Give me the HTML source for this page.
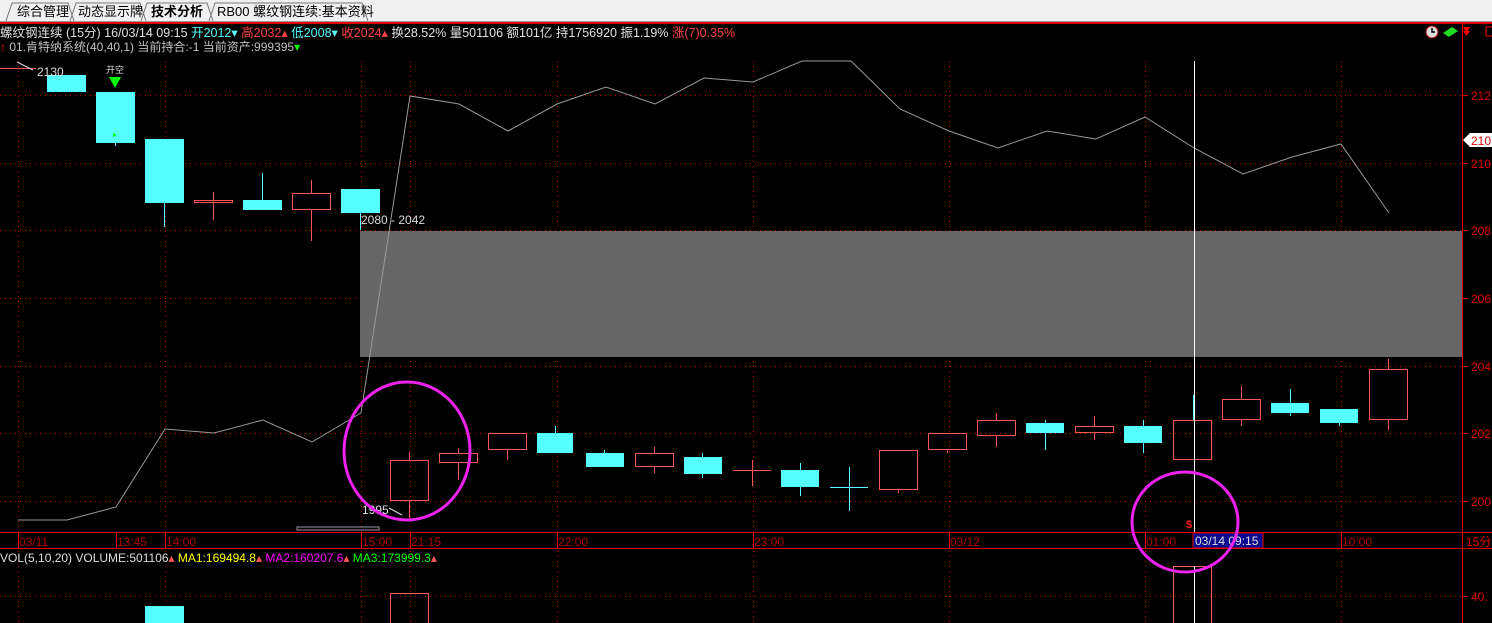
<!DOCTYPE html>
<html><head><meta charset="utf-8"><style>
html,body{margin:0;padding:0;background:#000;width:1492px;height:623px;overflow:hidden}
svg{display:block}
text{font-family:"Liberation Sans","Noto Sans CJK SC",sans-serif}
</style></head><body>
<svg width="1492" height="623" viewBox="0 0 1492 623" xmlns="http://www.w3.org/2000/svg">
<rect width="1492" height="623" fill="#000"/>
<!-- tab bar -->
<rect x="0" y="0" width="1492" height="21" fill="#f0f0f0"/>
<line x1="0" y1="21.5" x2="1492" y2="21.5" stroke="#999"/>
<line x1="0" y1="23" x2="1492" y2="23" stroke="#e00000" stroke-width="2"/>
<g fill="none" stroke="#777">
<path d="M6 21 L12 3 H68 L74 21"/><path d="M70 21 L76 3 H140 L146 21"/><path d="M141 21 L147 3 H207 L213 21"/><path d="M209 21 L215 3 H362 L368 21"/>
</g>
<g font-size="13" fill="#000">
<text x="17" y="16">综合管理</text><text x="78" y="16">动态显示牌</text><text x="151" y="16" font-weight="bold">技术分析</text><text x="217" y="16">RB00 螺纹钢连续:基本资料</text>
</g>
<!-- info lines -->
<text x="0" y="37" font-size="12.5" fill="#e0e0e0">螺纹钢连续 (15分) 16/03/14 09:15 <tspan fill="#55ffff">开2012</tspan><tspan fill="#55ffff">▾</tspan> <tspan fill="#ff4444">高2032▴</tspan> <tspan fill="#55ffff">低2008▾</tspan> <tspan fill="#ff4444">收2024▴</tspan> 换28.52% 量501106 额101亿 持1756920 振1.19% <tspan fill="#ff4444">涨(7)0.35%</tspan></text>
<text x="0" y="51" font-size="12" fill="#c0c0c0"><tspan fill="#ff2020">↑</tspan> 01.肯特纳系统(40,40,1) 当前持合:-1 当前资产:999395<tspan fill="#00ff00">▾</tspan></text>
<!-- icons top right -->
<circle cx="1432" cy="32" r="6" fill="#ddd" stroke="#a00"/><path d="M1432 28 V32 H1435" stroke="#000" fill="none" stroke-width="1.5"/>
<path d="M1443 33 L1452 27 L1458 31 L1449 37 Z" fill="#22dd22"/>
<path d="M1463 27 h7 l-2 4 h2 l-3.5 5 l-3.5 -5 h2 z" fill="#f00"/>
<rect x="1486" y="27" width="8" height="9" fill="none" stroke="#f00"/>
<!-- grid dotted -->
<g stroke="#c00000" stroke-dasharray="1 4" stroke-width="1">
<line x1="0" y1="95.5" x2="1462" y2="95.5"/><line x1="0" y1="163.5" x2="1462" y2="163.5"/><line x1="0" y1="230.5" x2="1462" y2="230.5"/><line x1="0" y1="298.5" x2="1462" y2="298.5"/><line x1="0" y1="366.5" x2="1462" y2="366.5"/><line x1="0" y1="433.5" x2="1462" y2="433.5"/><line x1="0" y1="501.5" x2="1462" y2="501.5"/>
<line x1="0" y1="596.5" x2="1462" y2="596.5"/>
<line x1="18.5" y1="61" x2="18.5" y2="623"/><line x1="165.5" y1="61" x2="165.5" y2="623"/><line x1="361.5" y1="61" x2="361.5" y2="623"/><line x1="410.5" y1="61" x2="410.5" y2="623"/><line x1="557.5" y1="61" x2="557.5" y2="623"/><line x1="753.5" y1="61" x2="753.5" y2="623"/><line x1="949.5" y1="61" x2="949.5" y2="623"/><line x1="1145.5" y1="61" x2="1145.5" y2="623"/><line x1="1341.5" y1="61" x2="1341.5" y2="623"/>
</g>
<!-- gray band -->
<rect x="360" y="231" width="1102" height="126" fill="#666"/>
<!-- gray line -->
<polyline fill="none" stroke="#999" stroke-width="1" points="18,520 67,520 116,507 165,429 214,433 263,420 312,442 361,413 410,96 459,104 508,131 557,104 606,87 655,104 704,78 753,82 802,61 851,61 900,109 949,131 998,148 1047,131 1096,139 1145,117 1194,148 1243,174 1292,157 1341,144 1389,213"/>
<!-- candles -->
<g fill="#55ffff">
<rect x="47" y="75" width="39" height="17"/>
<rect x="96" y="92" width="39" height="51"/><rect x="115" y="143" width="1" height="3"/>
<rect x="145" y="139" width="39" height="64"/><rect x="164" y="203" width="1" height="24"/>
<rect x="243" y="200" width="39" height="10"/><rect x="262" y="173" width="1" height="27"/>
<rect x="341" y="189" width="39" height="24"/><rect x="360" y="213" width="1" height="17"/>
<rect x="537" y="433" width="36" height="20"/><rect x="555" y="426" width="1" height="7"/>
<rect x="586" y="453" width="38" height="14"/><rect x="604" y="450" width="1" height="3"/>
<rect x="684" y="457" width="38" height="17"/><rect x="702" y="453" width="1" height="25"/>
<rect x="781" y="470" width="38" height="17"/><rect x="800" y="463" width="1" height="33"/>
<rect x="830" y="487" width="38" height="1"/><rect x="849" y="467" width="1" height="44"/>
<rect x="1026" y="423" width="38" height="10"/><rect x="1045" y="420" width="1" height="30"/>
<rect x="1124" y="426" width="38" height="17"/><rect x="1143" y="420" width="1" height="33"/>
<rect x="1271" y="403" width="38" height="10"/><rect x="1290" y="389" width="1" height="27"/>
<rect x="1320" y="409" width="38" height="14"/><rect x="1339" y="423" width="1" height="3"/>
<rect x="145" y="606" width="39" height="17"/>
</g>
<g fill="none" stroke="#ff5555" stroke-width="1">
<rect x="194.5" y="200.5" width="38" height="2"/><line x1="213.5" y1="192" x2="213.5" y2="220"/>
<rect x="292.5" y="193.5" width="38" height="16"/><line x1="311.5" y1="180" x2="311.5" y2="193"/><line x1="311.5" y1="210" x2="311.5" y2="241"/>
<rect x="390.5" y="460.5" width="38" height="40"/><line x1="409.5" y1="452" x2="409.5" y2="460"/><line x1="409.5" y1="501" x2="409.5" y2="518"/>
<rect x="439.5" y="453.5" width="38" height="9"/><line x1="458.5" y1="448" x2="458.5" y2="453"/><line x1="458.5" y1="463" x2="458.5" y2="480"/>
<rect x="488.5" y="433.5" width="38" height="16"/><line x1="507.5" y1="450" x2="507.5" y2="460"/>
<rect x="635.5" y="453.5" width="38" height="13"/><line x1="654.5" y1="447" x2="654.5" y2="453"/><line x1="654.5" y1="467" x2="654.5" y2="473"/>
<line x1="733" y1="470.5" x2="771" y2="470.5"/><line x1="752.5" y1="460" x2="752.5" y2="486"/>
<rect x="879.5" y="450.5" width="38" height="39"/><line x1="898.5" y1="490" x2="898.5" y2="493"/>
<rect x="928.5" y="433.5" width="38" height="16"/><line x1="947.5" y1="450" x2="947.5" y2="453"/>
<rect x="977.5" y="420.5" width="38" height="15"/><line x1="996.5" y1="413" x2="996.5" y2="420"/><line x1="996.5" y1="436" x2="996.5" y2="447"/>
<rect x="1075.5" y="426.5" width="38" height="6"/><line x1="1094.5" y1="416" x2="1094.5" y2="426"/><line x1="1094.5" y1="433" x2="1094.5" y2="440"/>
<rect x="1173.5" y="420.5" width="38" height="39"/>
<rect x="1222.5" y="399.5" width="38" height="20"/><line x1="1241.5" y1="386" x2="1241.5" y2="399"/><line x1="1241.5" y1="420" x2="1241.5" y2="426"/>
<rect x="1369.5" y="369.5" width="38" height="50"/><line x1="1388.5" y1="359" x2="1388.5" y2="369"/><line x1="1388.5" y1="420" x2="1388.5" y2="430"/>
<rect x="390.5" y="593.5" width="38" height="32"/>
<rect x="1173.5" y="566.5" width="38" height="60"/>
<polyline points="0,68.5 36,68.5"/>
</g>
<!-- white crosshair -->
<line x1="1194.5" y1="61" x2="1194.5" y2="533" stroke="#fff"/>
<line x1="1194.5" y1="566" x2="1194.5" y2="623" stroke="#fff"/>
<line x1="1193.5" y1="395" x2="1193.5" y2="420" stroke="#55ffff"/>
<!-- markers / labels -->
<text x="37" y="76" font-size="12" fill="#ddd">2130</text>
<path d="M17 62 L33 70" stroke="#ddd"/>
<text x="106" y="73" font-size="9" fill="#ddd">开空</text>
<path d="M109 77 H121 L115 88 Z" fill="#00ff00"/>
<path d="M113 133 L117 135 L113 137 Z" fill="#00ff00"/>
<text x="361" y="224" font-size="12" fill="#ddd">2080 - 2042</text>
<text x="362" y="514" font-size="12" fill="#ddd">1995</text>
<path d="M389 508 L402 515" stroke="#ddd"/>
<rect x="297" y="527" width="82" height="3" fill="none" stroke="#99a" stroke-width="1"/>
<text x="1186" y="528" font-size="11" fill="#ff2020" font-weight="bold">$</text>
<!-- right axis -->
<line x1="1462.5" y1="24" x2="1462.5" y2="623" stroke="#e00000"/>
<g font-size="12" fill="#e00000">
<text x="1471" y="100">212</text><text x="1471" y="168">210</text><text x="1471" y="235">208</text><text x="1471" y="303">206</text><text x="1471" y="371">204</text><text x="1471" y="438">202</text><text x="1471" y="506">200</text><text x="1471" y="601">40.</text>
<text x="1466" y="546">15分</text>
</g>
<g stroke="#e00000"><line x1="1462" y1="95.5" x2="1468" y2="95.5"/><line x1="1462" y1="163.5" x2="1468" y2="163.5"/><line x1="1462" y1="230.5" x2="1468" y2="230.5"/><line x1="1462" y1="298.5" x2="1468" y2="298.5"/><line x1="1462" y1="366.5" x2="1468" y2="366.5"/><line x1="1462" y1="433.5" x2="1468" y2="433.5"/><line x1="1462" y1="501.5" x2="1468" y2="501.5"/><line x1="1462" y1="596.5" x2="1468" y2="596.5"/></g>
<path d="M1463 140 L1470 133 H1492 V147 H1470 Z" fill="#fff"/>
<text x="1471" y="145" font-size="12" fill="#e00000">210</text>
<!-- time axis -->
<line x1="0" y1="532.5" x2="1492" y2="532.5" stroke="#e00000"/>
<line x1="0" y1="548.5" x2="1492" y2="548.5" stroke="#e00000"/>
<g stroke="#e00000"><line x1="18.5" y1="533" x2="18.5" y2="548"/><line x1="116.5" y1="533" x2="116.5" y2="548"/><line x1="165.5" y1="533" x2="165.5" y2="548"/><line x1="361.5" y1="533" x2="361.5" y2="548"/><line x1="410.5" y1="533" x2="410.5" y2="548"/><line x1="557.5" y1="533" x2="557.5" y2="548"/><line x1="753.5" y1="533" x2="753.5" y2="548"/><line x1="949.5" y1="533" x2="949.5" y2="548"/><line x1="1145.5" y1="533" x2="1145.5" y2="548"/><line x1="1341.5" y1="533" x2="1341.5" y2="548"/></g>
<g font-size="12" fill="#b00000">
<text x="19" y="546">03/11</text><text x="117" y="546">13:45</text><text x="166" y="546">14:00</text><text x="362" y="546">15:00</text><text x="411" y="546">21:15</text><text x="558" y="546">22:00</text><text x="754" y="546">23:00</text><text x="950" y="546">03/12</text><text x="1146" y="546">01:00</text><text x="1342" y="546">10:00</text>
</g>
<rect x="1193" y="533" width="70" height="15" fill="#0a0a90" stroke="#e00000"/>
<text x="1195" y="545" font-size="12" fill="#ddd">03/14 09:15</text>
<!-- vol line -->
<text x="0" y="562" font-size="12" fill="#ddd">VOL(5,10,20) VOLUME:501106<tspan fill="#ff5555">▴</tspan> <tspan fill="#ffff00">MA1:169494.8</tspan><tspan fill="#ff5555">▴</tspan> <tspan fill="#ff00ff">MA2:160207.6</tspan><tspan fill="#ff5555">▴</tspan> <tspan fill="#00ff00">MA3:173999.3</tspan><tspan fill="#ff5555">▴</tspan></text>
<!-- magenta ellipses -->
<ellipse cx="407" cy="451" rx="63" ry="69" fill="none" stroke="#ee22ee" stroke-width="3"/>
<ellipse cx="1185" cy="522" rx="53" ry="50" fill="none" stroke="#ee22ee" stroke-width="3"/>
</svg>
</body></html>
